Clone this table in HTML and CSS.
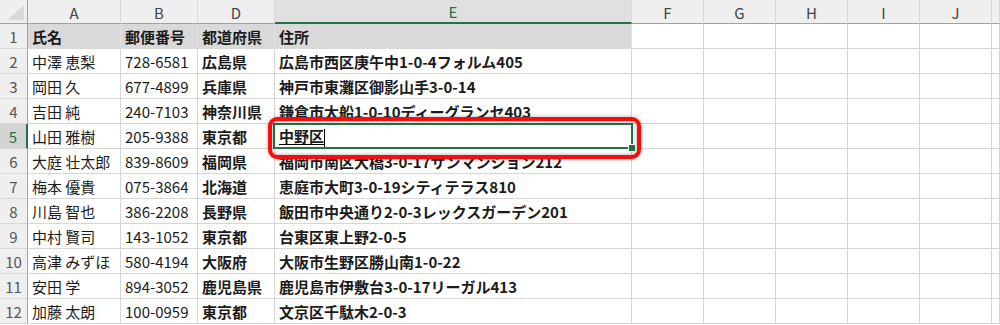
FILE: index.html
```html
<!DOCTYPE html>
<html lang="ja">
<head>
<meta charset="utf-8">
<title>Sheet</title>
<link rel="stylesheet" href="styles.css">
</head>
<body>
<div class="sheet">
  <div class="hd corner"><span class="tri"></span></div>
  <div class="hd col">A</div>
  <div class="hd col">B</div>
  <div class="hd col">D</div>
  <div class="hd col sel">E</div>
  <div class="hd col">F</div>
  <div class="hd col">G</div>
  <div class="hd col">H</div>
  <div class="hd col">I</div>
  <div class="hd col">J</div>
  <div class="hd col"></div>

  <div class="hd row">1</div>
  <div class="c title">氏名</div><div class="c title">郵便番号</div><div class="c title">都道府県</div><div class="c title">住所</div>
  <div class="c"></div><div class="c"></div><div class="c"></div><div class="c"></div><div class="c"></div><div class="c"></div>

  <div class="hd row">2</div>
  <div class="c">中澤 恵梨</div><div class="c">728-6581</div><div class="c b">広島県</div><div class="c b">広島市西区庚午中1-0-4フォルム405</div>
  <div class="c"></div><div class="c"></div><div class="c"></div><div class="c"></div><div class="c"></div><div class="c"></div>

  <div class="hd row">3</div>
  <div class="c">岡田 久</div><div class="c">677-4899</div><div class="c b">兵庫県</div><div class="c b">神戸市東灘区御影山手3-0-14</div>
  <div class="c"></div><div class="c"></div><div class="c"></div><div class="c"></div><div class="c"></div><div class="c"></div>

  <div class="hd row">4</div>
  <div class="c">吉田 純</div><div class="c">240-7103</div><div class="c b">神奈川県</div><div class="c b">鎌倉市大船1-0-10ディーグランセ403</div>
  <div class="c"></div><div class="c"></div><div class="c"></div><div class="c"></div><div class="c"></div><div class="c"></div>

  <div class="hd row sel">5</div>
  <div class="c">山田 雅樹</div><div class="c">205-9388</div><div class="c b">東京都</div>
  <div class="c b active"><span class="ime">中野区</span><span class="caret"></span><span class="selbox"><span class="handle"></span></span><span class="callout"></span></div>
  <div class="c"></div><div class="c"></div><div class="c"></div><div class="c"></div><div class="c"></div><div class="c"></div>

  <div class="hd row">6</div>
  <div class="c">大庭 壮太郎</div><div class="c">839-8609</div><div class="c b">福岡県</div><div class="c b">福岡市南区大橋3-0-17サンマンション212</div>
  <div class="c"></div><div class="c"></div><div class="c"></div><div class="c"></div><div class="c"></div><div class="c"></div>

  <div class="hd row">7</div>
  <div class="c">梅本 優貴</div><div class="c">075-3864</div><div class="c b">北海道</div><div class="c b">恵庭市大町3-0-19シティテラス810</div>
  <div class="c"></div><div class="c"></div><div class="c"></div><div class="c"></div><div class="c"></div><div class="c"></div>

  <div class="hd row">8</div>
  <div class="c">川島 智也</div><div class="c">386-2208</div><div class="c b">長野県</div><div class="c b">飯田市中央通り2-0-3レックスガーデン201</div>
  <div class="c"></div><div class="c"></div><div class="c"></div><div class="c"></div><div class="c"></div><div class="c"></div>

  <div class="hd row">9</div>
  <div class="c">中村 賢司</div><div class="c">143-1052</div><div class="c b">東京都</div><div class="c b">台東区東上野2-0-5</div>
  <div class="c"></div><div class="c"></div><div class="c"></div><div class="c"></div><div class="c"></div><div class="c"></div>

  <div class="hd row">10</div>
  <div class="c">高津 みずほ</div><div class="c">580-4194</div><div class="c b">大阪府</div><div class="c b">大阪市生野区勝山南1-0-22</div>
  <div class="c"></div><div class="c"></div><div class="c"></div><div class="c"></div><div class="c"></div><div class="c"></div>

  <div class="hd row">11</div>
  <div class="c">安田 学</div><div class="c">894-3052</div><div class="c b">鹿児島県</div><div class="c b">鹿児島市伊敷台3-0-17リーガル413</div>
  <div class="c"></div><div class="c"></div><div class="c"></div><div class="c"></div><div class="c"></div><div class="c"></div>

  <div class="hd row">12</div>
  <div class="c">加藤 太朗</div><div class="c">100-0959</div><div class="c b">東京都</div><div class="c b">文京区千駄木2-0-3</div>
  <div class="c"></div><div class="c"></div><div class="c"></div><div class="c"></div><div class="c"></div><div class="c"></div>
</div>
</body>
</html>
```
FILE: styles.css
```css
html, body {
  margin: 0;
  padding: 0;
  background: #ffffff;
  overflow: hidden;
}
.sheet {
  display: grid;
  grid-template-columns: 28px 93px 77px 77px 357px 72px 72px 72px 72px 72px 1fr;
  grid-template-rows: 24px repeat(12, 25px);
  width: 1000px;
  font-family: "Noto Sans CJK JP", "Noto Sans", sans-serif;
  font-size: 15px;
  color: #1b1b1b;
}
.c, .hd {
  box-sizing: border-box;
  border-right: 1px solid #d6d6d6;
  border-bottom: 1px solid #d6d6d6;
  white-space: nowrap;
  overflow: visible;
  display: flex;
  align-items: center;
  line-height: 1;
}
.c {
  padding-left: 4px;
}
.b {
  font-weight: 700;
}
.title {
  font-weight: 700;
  background: #d9d9d9;
  border-right-color: #e2e2e2;
  border-bottom-color: #d9d9d9;
}
.hd {
  background: #efefef;
  color: #444444;
  justify-content: center;
  font-size: 15px;
}
.col {
  border-bottom: 1px solid #a3a3a3;
  border-right-color: #d8d8d8;
  padding-top: 1px;
}
.row {
  border-right: 1px solid #a3a3a3;
  border-bottom-color: #d8d8d8;
  color: #555555;
}
.col.sel {
  background: #e0e0e0;
  color: #217346;
  border-bottom: 2px solid #217346;
}
.row.sel {
  background: #d4d4d4;
  color: #217346;
  border-right: 2px solid #217346;
}
.corner {
  align-items: flex-end;
  justify-content: flex-end;
  padding: 0 3px 3px 0;
  border-bottom: 1px solid #a3a3a3;
  border-right: 1px solid #a3a3a3;
}
.tri {
  width: 17px;
  height: 15px;
  background: #dadada;
  clip-path: polygon(100% 0, 100% 100%, 0 100%);
}
.active {
  position: relative;
  z-index: 2;
}
.ime {
  display: inline-block;
  line-height: 15px;
  padding-bottom: 1px;
  margin-top: 1px;
  border-bottom: 1px solid #000000;
}
.caret {
  width: 1px;
  height: 18px;
  background: #000000;
  margin-top: 3px;
}
.selbox {
  position: absolute;
  top: -1px;
  left: -2px;
  right: -2px;
  bottom: -1px;
  border: 2px solid #217346;
}
.handle {
  position: absolute;
  right: -5px;
  bottom: -5px;
  width: 6px;
  height: 6px;
  background: #217346;
  border: 1px solid #ffffff;
}
.callout {
  position: absolute;
  left: -7px;
  top: -7px;
  width: 373px;
  height: 42px;
  box-sizing: border-box;
  border: 4px solid #ff0a0a;
  border-radius: 9px;
  box-shadow: 0 0 4px rgba(0, 0, 0, 0.3), inset 0 0 4px rgba(0, 0, 0, 0.35);
}
```
